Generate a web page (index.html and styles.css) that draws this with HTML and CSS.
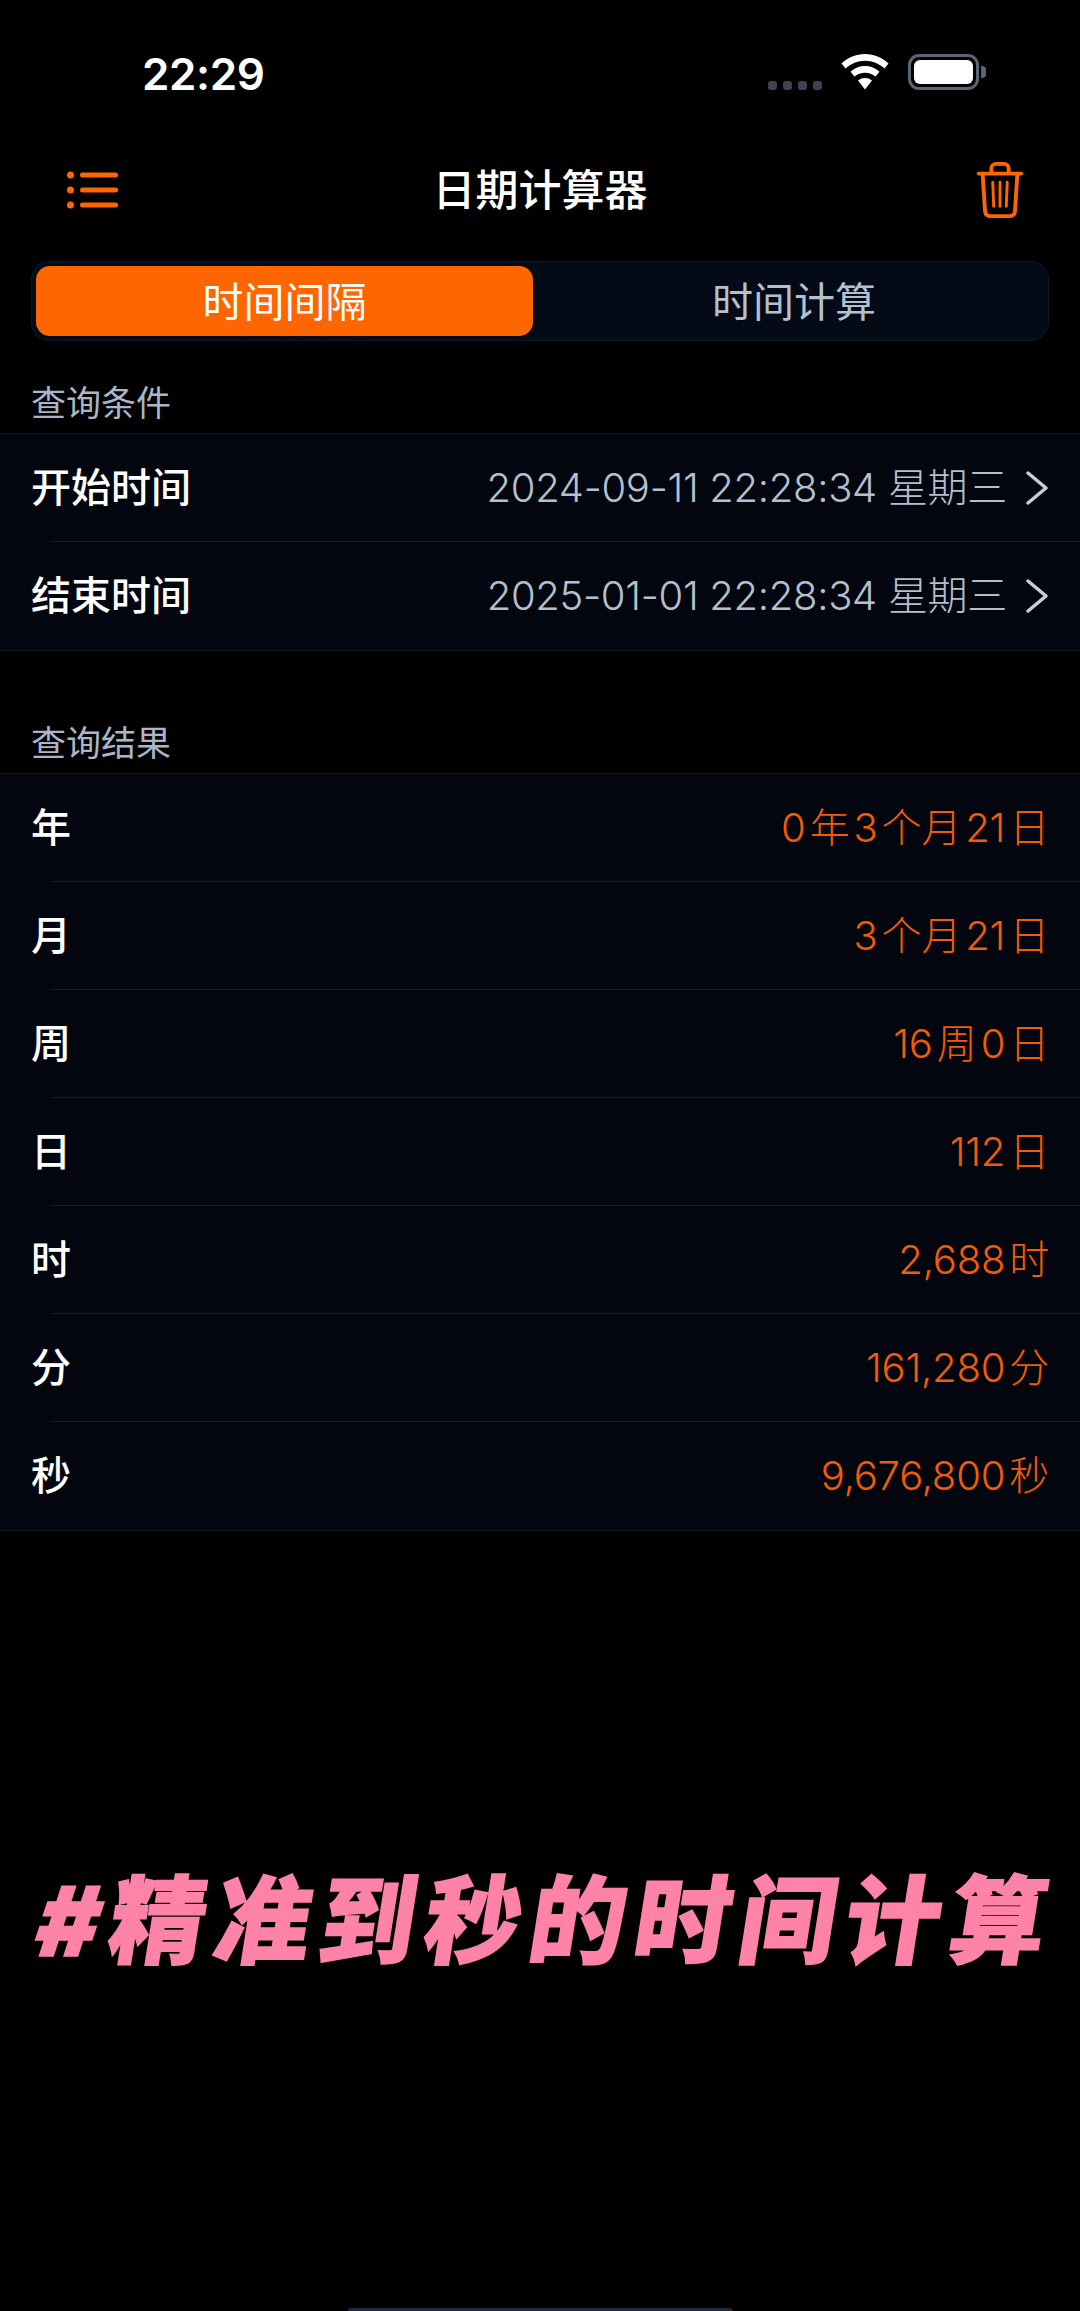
FILE: index.html
```html
<!DOCTYPE html>
<html lang="zh-CN">
<head>
    <meta charset="UTF-8">
    <meta name="viewport" content="width=device-width, initial-scale=1.0">
    <title>日期计算器</title>
    <link rel="stylesheet" href="styles.css">
</head>
<body>
    <div class="status-bar">
        <span class="clock">22:29</span>
        <div class="status-icons">
            <div class="signal"><i></i><i></i><i></i><i></i></div>
            <svg class="wifi" width="50" height="36" viewBox="0 0 50 36">
                <path d="M25 0C16 0 8 3.500 1.500 9.500L5.500 14.500C11 9.500 17.500 6.700 25 6.700S39 9.500 44.500 14.500L48.500 9.500C42 3.500 34 0 25 0Z" fill="#fff"/>
                <path d="M25 12C19.500 12 14.500 14 10.500 17.700L14.500 22.500C17.500 20 21 18.700 25 18.700S32.500 20 35.500 22.500L39.500 17.700C35.500 14 30.500 12 25 12Z" fill="#fff"/>
                <path d="M25 24C22.500 24 20 24.800 18 26.500L25 35.500L32 26.500C30 24.800 27.500 24 25 24Z" fill="#fff"/>
            </svg>
            <div class="battery"><div class="battery-level"></div></div>
            <div class="battery-cap"></div>
        </div>
    </div>

    <div class="nav-bar">
        <svg class="menu-icon" width="52" height="38" viewBox="0 0 52 38">
            <circle cx="3.500" cy="4" r="3.500" fill="#ff6600"/>
            <circle cx="3.500" cy="19" r="3.500" fill="#ff6600"/>
            <circle cx="3.500" cy="34" r="3.500" fill="#ff6600"/>
            <rect x="13" y="1.500" width="38" height="5" rx="2.500" fill="#ff6600"/>
            <rect x="13" y="16.500" width="38" height="5" rx="2.500" fill="#ff6600"/>
            <rect x="13" y="31.500" width="38" height="5" rx="2.500" fill="#ff6600"/>
        </svg>
        <h1>日期计算器</h1>
        <svg class="trash-icon" width="48" height="56" viewBox="0 0 48 58" fill="none" stroke="#ff6600" stroke-width="4" stroke-linecap="round" stroke-linejoin="round">
            <path d="M2 12H46"/>
            <path d="M15 11V7C15 4 17 2 20 2H28C31 2 33 4 33 7V11"/>
            <path d="M6 12L8.500 51C8.700 54 10.500 56 13.500 56H34.500C37.500 56 39.300 54 39.500 51L42 12"/>
            <path d="M16.500 21L17.500 46" stroke-width="3"/>
            <path d="M24 21V46" stroke-width="3"/>
            <path d="M31.500 21L30.500 46" stroke-width="3"/>
        </svg>
    </div>

    <div class="segment">
        <div class="segment-item active">时间间隔</div>
        <div class="segment-item">时间计算</div>
    </div>

    <div class="section-title">查询条件</div>
    <div class="card">
        <div class="row">
            <span class="row-label">开始时间</span>
            <span class="row-value">2024-09-11 22:28:34 星期三</span>
            <svg class="chevron" width="24" height="34" viewBox="0 0 24 34"><path d="M3 2L21 17L3 32" fill="none" stroke="#c5cfdc" stroke-width="3.500" stroke-linecap="round" stroke-linejoin="round"/></svg>
        </div>
        <div class="row">
            <span class="row-label">结束时间</span>
            <span class="row-value">2025-01-01 22:28:34 星期三</span>
            <svg class="chevron" width="24" height="34" viewBox="0 0 24 34"><path d="M3 2L21 17L3 32" fill="none" stroke="#c5cfdc" stroke-width="3.500" stroke-linecap="round" stroke-linejoin="round"/></svg>
        </div>
    </div>

    <div class="section-title results">查询结果</div>
    <div class="card">
        <div class="row"><span class="row-label">年</span><span class="row-result">0 年 3 个月 21 日</span></div>
        <div class="row"><span class="row-label">月</span><span class="row-result">3 个月 21 日</span></div>
        <div class="row"><span class="row-label">周</span><span class="row-result">16 周 0 日</span></div>
        <div class="row"><span class="row-label">日</span><span class="row-result">112 日</span></div>
        <div class="row"><span class="row-label">时</span><span class="row-result">2,688 时</span></div>
        <div class="row"><span class="row-label">分</span><span class="row-result">161,280 分</span></div>
        <div class="row"><span class="row-label">秒</span><span class="row-result">9,676,800 秒</span></div>
    </div>

    <div class="banner">#精准到秒的时间计算</div>

    <div class="home-indicator"></div>
</body>
</html>
```

FILE: styles.css
```css
* {
    box-sizing: border-box;
}

html, body {
    height: 2311px;
}

body {
    margin: 0;
    background-color: #000;
    color: #fff;
    font-family: 'Inter', 'Noto Sans CJK SC', sans-serif;
    display: flex;
    flex-direction: column;
    overflow: hidden;
}

.status-bar {
    height: 134px;
    padding: 52px 0 0 142px;
    display: flex;
    justify-content: space-between;
    align-items: flex-start;
}

.clock {
    font-size: 44px;
    line-height: 44px;
    font-weight: 600;
    letter-spacing: -0.4px;
}

.status-icons {
    display: flex;
    align-items: center;
    height: 36px;
    margin-top: 2px;
    padding-right: 94px;
}

.signal {
    display: flex;
    gap: 6px;
    margin: 27px 18px 0 0;
}

.signal i {
    width: 9px;
    height: 9px;
    border-radius: 3px;
    background-color: #3c4454;
}

.wifi {
    margin-right: 18px;
}

.battery {
    width: 71px;
    height: 36px;
    border: 3px solid #5a6675;
    border-radius: 11px;
    padding: 3px;
}

.battery-level {
    height: 100%;
    background-color: #fff;
    border-radius: 6px;
}

.battery-cap {
    width: 5px;
    height: 12px;
    margin-left: 2px;
    background-color: #5a6675;
    border-radius: 0 4px 4px 0;
}

.nav-bar {
    height: 112px;
    padding: 0 56px 0 67px;
    display: grid;
    grid-template-columns: 1fr auto 1fr;
    align-items: center;
    flex-shrink: 0;
}

.trash-icon {
    justify-self: end;
}

h1 {
    margin: 0 11px 0 0;
    font-size: 43px;
    font-weight: 500;
    line-height: 56px;
}

.segment {
    margin: 15px 31px 0;
    height: 80px;
    padding: 4px;
    display: flex;
    background-color: #050a17;
    border: 1px solid #0f1626;
    border-radius: 18px;
    flex-shrink: 0;
}

.segment-item {
    display: flex;
    justify-content: center;
    align-items: center;
    padding: 0 0 5px 11px;
    font-size: 41px;
    color: #b5c0cf;
    border-radius: 14px;
    flex: 1;
}

.segment-item.active {
    flex: none;
    width: 497px;
    padding-left: 0;
    background-color: #ff6600;
    color: #fff;
}

.section-title {
    margin-top: 44px;
    padding-left: 31px;
    height: 48px;
    font-size: 35px;
    line-height: 36px;
    color: #aab6c6;
    flex-shrink: 0;
}

.section-title.results {
    margin-top: 74px;
}

.card {
    background-color: #03060f;
    border-top: 1px solid #121a28;
    border-bottom: 1px solid #121a28;
    flex-shrink: 0;
}

.row {
    height: 108px;
    padding: 0 31px;
    display: flex;
    align-items: center;
    position: relative;
}

.row + .row::before {
    content: "";
    position: absolute;
    left: 50px;
    right: 0;
    top: -1px;
    height: 1px;
    background-color: #141c2a;
}

.row-label {
    font-size: 40px;
    font-weight: 500;
    line-height: 50px;
}

.row-value {
    margin-left: auto;
    font-size: 40px;
    line-height: 50px;
    font-weight: 300;
    letter-spacing: -0.3px;
    color: #b5c0cf;
    white-space: nowrap;
}

.chevron {
    margin-left: 18px;
}

.row-result {
    margin-left: auto;
    font-size: 40px;
    line-height: 50px;
    font-weight: 300;
    color: #f25c05;
    letter-spacing: -0.2px;
    word-spacing: -7px;
}

.banner {
    margin-top: 338px;
    padding-left: 38px;
    font-size: 96px;
    line-height: 104px;
    font-weight: 900;
    color: #ff82a9;
    letter-spacing: 9px;
    -webkit-text-stroke: 1.5px #ff82a9;
    white-space: nowrap;
    transform: skewX(-9deg);
    flex-shrink: 0;
}

.home-indicator {
    margin: auto auto 0;
    width: 385px;
    height: 3px;
    background-color: #1c2a3a;
    border-radius: 3px 3px 0 0;
}
```
